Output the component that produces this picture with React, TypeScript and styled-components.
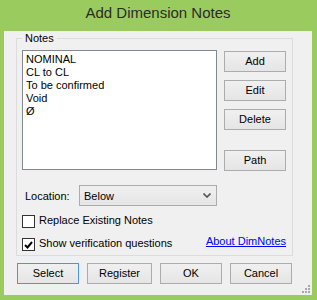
import React, { useState } from "react";
import styled, { createGlobalStyle } from "styled-components";

const Global = createGlobalStyle`
  html, body {
    margin: 0;
    padding: 0;
    background: #9acb5e;
  }
  * {
    box-sizing: border-box;
  }
`;

const Window = styled.div`
  width: 317px;
  height: 300px;
  display: flex;
  flex-direction: column;
  background: #9acb5e;
  padding: 0 5px 5px 4px;
  font-family: "Liberation Sans", Arial, sans-serif;
  font-size: 11px;
  color: #000;
`;

const TitleBar = styled.div`
  height: 31px;
  padding-top: 4px;
  line-height: 18px;
  text-align: center;
  font-size: 15px;
  color: #2b2b2b;
`;

const Client = styled.div`
  position: relative;
  flex: 1;
  background: #f0f0f0;
  padding-left: 12px;
`;

const Group = styled.fieldset`
  width: 277px;
  margin: 0;
  padding: 5px 5px 4px 5px;
  border: 1px solid #dcdcdc;
`;

const Legend = styled.legend`
  padding: 0 3px;
  line-height: 14px;
  font-size: 11px;
`;

const TopRow = styled.div`
  display: flex;
  gap: 7px;
`;

const ListBox = styled.div`
  width: 195px;
  height: 120px;
  background: #fff;
  border: 1px solid #828790;
  padding: 2px 3px;
  line-height: 13px;
`;

const ListItem = styled.div`
  white-space: nowrap;
`;

const ButtonColumn = styled.div`
  display: flex;
  flex-direction: column;
  gap: 8px;
  padding-top: 1px;
`;

const Button = styled.button<{ $w?: number; $focused?: boolean; $spaced?: boolean }>`
  width: ${(p) => p.$w ?? 62}px;
  height: 21px;
  margin: 0;
  margin-top: ${(p) => (p.$spaced ? 12 : 0)}px;
  padding: 0;
  border: 1px solid ${(p) => (p.$focused ? "#4a95e8" : "#acacac")};
  background: linear-gradient(#f0f0f0, #e5e5e5);
  font-family: "Liberation Sans", Arial, sans-serif;
  font-size: 11px;
  line-height: 19px;
  color: #000;
`;

const LocationRow = styled.div`
  display: flex;
  align-items: center;
  margin-top: 14px;
`;

const Label = styled.span`
  width: 57px;
  padding-left: 3px;
`;

const Dropdown = styled.div`
  width: 138px;
  height: 21px;
  display: flex;
  align-items: center;
  justify-content: space-between;
  padding: 0 5px 0 4px;
  border: 1px solid #acacac;
  background: linear-gradient(#f0f0f0, #e5e5e5);
`;

const CheckRow = styled.div<{ $top: number }>`
  display: flex;
  align-items: flex-start;
  margin-top: ${(p) => p.$top}px;
  height: 13px;
`;

const Box = styled.span`
  width: 13px;
  height: 13px;
  border: 1px solid #333;
  background: #fff;
  display: flex;
  align-items: center;
  justify-content: center;
`;

const CheckLabel = styled.span`
  margin-left: 4px;
  margin-top: -1px;
  line-height: 13px;
  white-space: nowrap;
`;

const Link = styled.a`
  margin-left: auto;
  margin-right: 1px;
  margin-top: -3px;
  line-height: 13px;
  color: #0000ff;
  text-decoration: underline;
  cursor: pointer;
`;

const BottomRow = styled.div`
  display: flex;
  gap: 8px;
  margin: 7px 0 0 1px;
`;

const Grip = styled.svg`
  position: absolute;
  right: 1px;
  bottom: 1px;
`;

const Check = ({ checked }: { checked: boolean }) => (
  <Box>
    {checked && (
      <svg width="9" height="8" viewBox="0 0 9 8">
        <path d="M1 4 L3.5 6.5 L8 1" fill="none" stroke="#000" strokeWidth="2" />
      </svg>
    )}
  </Box>
);

const notes = ["NOMINAL", "CL to CL", "To be confirmed", "Void", "Ø"];

const App = () => {
  const [replace, setReplace] = useState(false);
  const [verify, setVerify] = useState(true);

  return (
    <Window>
      <Global />
      <TitleBar>Add Dimension Notes</TitleBar>
      <Client>
        <Group>
          <Legend>Notes</Legend>
          <TopRow>
            <ListBox>
              {notes.map((n) => (
                <ListItem key={n}>{n}</ListItem>
              ))}
            </ListBox>
            <ButtonColumn>
              <Button>Add</Button>
              <Button>Edit</Button>
              <Button>Delete</Button>
              <Button $spaced>Path</Button>
            </ButtonColumn>
          </TopRow>
          <LocationRow>
            <Label>Location:</Label>
            <Dropdown>
              <span>Below</span>
              <svg width="8" height="5" viewBox="0 0 8 5">
                <path d="M0.5 0.5 L4 4 L7.5 0.5" fill="none" stroke="#555" strokeWidth="1.6" />
              </svg>
            </Dropdown>
          </LocationRow>
          <CheckRow $top={9} onClick={() => setReplace(!replace)}>
            <Check checked={replace} />
            <CheckLabel>Replace Existing Notes</CheckLabel>
          </CheckRow>
          <CheckRow $top={10}>
            <Check checked={verify} />
            <CheckLabel onClick={() => setVerify(!verify)}>Show verification questions</CheckLabel>
            <Link>About DimNotes</Link>
          </CheckRow>
        </Group>
        <BottomRow>
          <Button $focused>Select</Button>
          <Button $w={65}>Register</Button>
          <Button>OK</Button>
          <Button>Cancel</Button>
        </BottomRow>
        <Grip width="9" height="9" viewBox="0 0 9 9">
          <g fill="#a9a9a9">
            <rect x="6" y="0" width="2" height="2" />
            <rect x="3" y="3" width="2" height="2" />
            <rect x="6" y="3" width="2" height="2" />
            <rect x="0" y="6" width="2" height="2" />
            <rect x="3" y="6" width="2" height="2" />
            <rect x="6" y="6" width="2" height="2" />
          </g>
        </Grip>
      </Client>
    </Window>
  );
};

export default App;
